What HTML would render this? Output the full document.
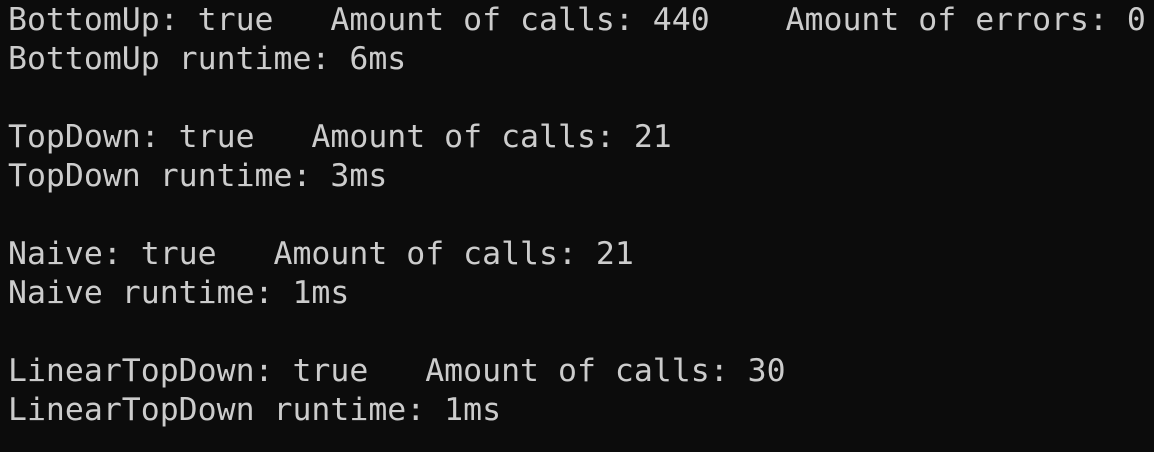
<!DOCTYPE html>
<html><head><meta charset="utf-8"><style>
html,body{margin:0;padding:0;background:#0c0c0c;width:1154px;height:452px;overflow:hidden}
pre{margin:0;padding:1px 0 0 8px;font-family:"DejaVu Sans Mono","Liberation Mono",monospace;font-size:31.5px;line-height:39px;color:#cccccc}
</style></head><body><pre>BottomUp: true   Amount of calls: 440    Amount of errors: 0
BottomUp runtime: 6ms

TopDown: true   Amount of calls: 21
TopDown runtime: 3ms

Naive: true   Amount of calls: 21
Naive runtime: 1ms

LinearTopDown: true   Amount of calls: 30
LinearTopDown runtime: 1ms</pre></body></html>
